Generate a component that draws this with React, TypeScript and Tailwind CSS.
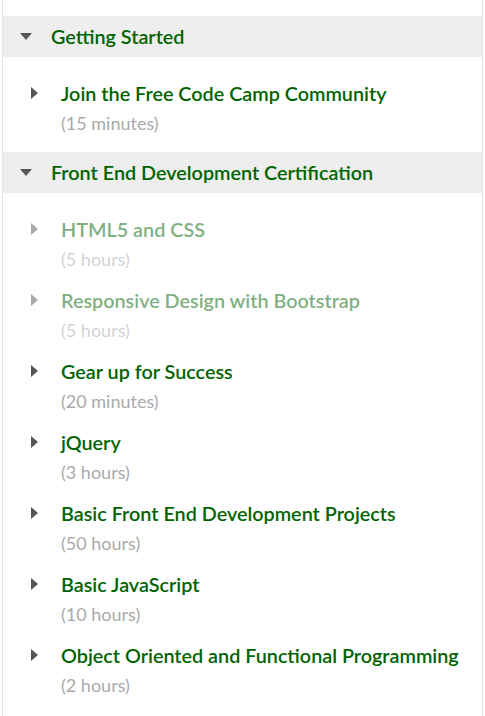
import React from 'react';

interface Challenge {
  title: string;
  time: string;
  done?: boolean;
}

interface Section {
  name: string;
  items: Challenge[];
}

const sections: Section[] = [
  {
    name: 'Getting Started',
    items: [{ title: 'Join the Free Code Camp Community', time: '15 minutes' }],
  },
  {
    name: 'Front End Development Certification',
    items: [
      { title: 'HTML5 and CSS', time: '5 hours', done: true },
      { title: 'Responsive Design with Bootstrap', time: '5 hours', done: true },
      { title: 'Gear up for Success', time: '20 minutes' },
      { title: 'jQuery', time: '3 hours' },
      { title: 'Basic Front End Development Projects', time: '50 hours' },
      { title: 'Basic JavaScript', time: '10 hours' },
      { title: 'Object Oriented and Functional Programming', time: '2 hours' },
    ],
  },
];

const CaretDown = () => (
  <svg width="12" height="7" viewBox="0 0 12 7" className="shrink-0">
    <path d="M0 0h12L6 7z" fill="#555" />
  </svg>
);

const CaretRight = () => (
  <svg width="7" height="12" viewBox="0 0 7 12" className="shrink-0">
    <path d="M0 0v12l7-6z" fill="#555" />
  </svg>
);

const ChallengeRow: React.FC<{ item: Challenge }> = ({ item }) => (
  <div className={`flex items-start pl-[28px] h-[71px] ${item.done ? 'opacity-50' : ''}`}>
    <div className="h-[26px] flex items-center">
      <CaretRight />
    </div>
    <div className="pl-[23px]">
      <div className="text-[19.8px] leading-[26px] font-semibold text-[#006400]">{item.title}</div>
      <div className="text-[18px] leading-[22px] mt-[6px] text-[#aaa]">({item.time})</div>
    </div>
  </div>
);

export default function App() {
  return (
    <div
      className="w-[485px] h-[716px] bg-white overflow-hidden"
      style={{ fontFamily: 'Lato, "Open Sans", sans-serif' }}
    >
      <div className="mx-[2px] w-[481px] min-h-[716px] border-x border-[#e3e3e3] pt-[16px]">
        {sections.map((s) => (
          <div key={s.name} className="pb-[1px]">
            <div className="flex items-center h-[41px] bg-[#eeeeee] pl-[17px]">
              <CaretDown />
              <span className="pl-[19px] text-[19.8px] font-semibold text-[#006400]">{s.name}</span>
            </div>
            <div className="pt-[23px]">
              {s.items.map((it) => (
                <ChallengeRow key={it.title} item={it} />
              ))}
            </div>
          </div>
        ))}
      </div>
    </div>
  );
}
